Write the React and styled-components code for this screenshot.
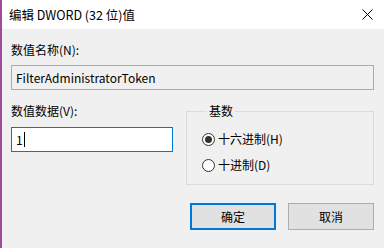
import React from 'react';
import styled, { createGlobalStyle } from 'styled-components';

const Global = createGlobalStyle`
  html, body {
    margin: 0;
    padding: 0;
    background: #f0f0f0;
  }
  body {
    font-family: "Noto Sans CJK SC", "Noto Sans", sans-serif;
    font-size: 12px;
    color: #000;
  }
`;

const Window = styled.div`
  width: 384px;
  height: 248px;
  box-sizing: border-box;
  border-left: 2px solid #a04a9e;
  display: flex;
  flex-direction: column;
  background: #f0f0f0;
  overflow: hidden;
`;

const TitleBar = styled.div`
  height: 29px;
  flex: none;
  background: #fff;
  display: flex;
  align-items: center;
  justify-content: space-between;
  padding: 0 11px 0 7px;
  font-size: 12.5px;
`;

const Body = styled.div`
  padding: 13px 10px 0 9px;
  display: flex;
  flex-direction: column;
`;

const Label = styled.div`
  line-height: 16px;
  height: 16px;
`;

const TextBox = styled.div`
  box-sizing: border-box;
  height: 25px;
  margin-top: ${p => p.$gap}px;
  border: 1px solid ${p => (p.$focused ? '#0078d7' : '#acacac')};
  background: ${p => (p.$focused ? '#fff' : '#f0f0f0')};
  display: flex;
  align-items: center;
  padding-left: 4px;
  line-height: 16px;
`;

const Caret = styled.span`
  display: inline-block;
  width: 1px;
  height: 15px;
  margin-left: 1px;
  background: #000;
`;

const Row = styled.div`
  display: flex;
  gap: 13px;
  margin-top: 13px;
`;

const Column = styled.div`
  width: 162px;
  display: flex;
  flex-direction: column;
`;

const Group = styled.fieldset`
  flex: 1;
  margin: 0;
  height: 82px;
  box-sizing: border-box;
  border: 1px solid #dcdcdc;
  padding: 12px 0 0 15px;
  display: flex;
  flex-direction: column;
  gap: 10px;
`;

const Legend = styled.legend`
  padding: 0 2px;
  margin-left: 5px;
  line-height: 16px;
`;

const RadioRow = styled.label`
  display: flex;
  align-items: center;
  gap: 3px;
  height: 16px;
  line-height: 16px;
`;

const Circle = styled.span`
  box-sizing: border-box;
  width: 13px;
  height: 13px;
  border-radius: 50%;
  border: 1px solid #333;
  background: #fff;
  display: flex;
  align-items: center;
  justify-content: center;

  &::after {
    content: '';
    width: 7px;
    height: 7px;
    border-radius: 50%;
    background: ${p => (p.$checked ? '#333' : 'transparent')};
  }
`;

const Buttons = styled.div`
  display: flex;
  justify-content: flex-end;
  gap: 12px;
  margin-top: 18px;
`;

const Button = styled.div`
  box-sizing: border-box;
  width: 86px;
  height: 27px;
  background: #e1e1e1;
  border: ${p => (p.$primary ? '2px solid #0078d7' : '1px solid #adadad')};
  display: flex;
  align-items: center;
  justify-content: center;
  line-height: 16px;
`;

function CloseIcon() {
  return (
    <svg width="11" height="11" viewBox="0 0 11 11">
      <path d="M0.5 0.5 L10.5 10.5 M10.5 0.5 L0.5 10.5" stroke="#000" strokeWidth="1" />
    </svg>
  );
}

export default function App() {
  return (
    <Window>
      <Global />
      <TitleBar>
        <span>编辑 DWORD (32 位)值</span>
        <CloseIcon />
      </TitleBar>
      <Body>
        <Label>数值名称(N):</Label>
        <TextBox $gap={7}>FilterAdministratorToken</TextBox>
        <Row>
          <Column>
            <Label>数值数据(V):</Label>
            <TextBox $gap={8} $focused>
              1<Caret />
            </TextBox>
          </Column>
          <Group>
            <Legend>基数</Legend>
            <RadioRow>
              <Circle $checked />
              十六进制(H)
            </RadioRow>
            <RadioRow>
              <Circle />
              十进制(D)
            </RadioRow>
          </Group>
        </Row>
        <Buttons>
          <Button $primary>确定</Button>
          <Button>取消</Button>
        </Buttons>
      </Body>
    </Window>
  );
}
